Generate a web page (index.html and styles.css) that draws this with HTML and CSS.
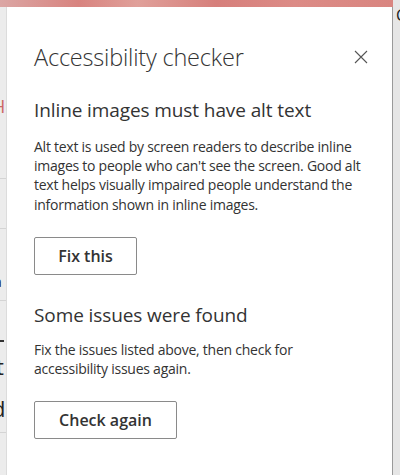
FILE: index.html
```html
<!DOCTYPE html>
<html>
<head>
<meta charset="utf-8">
<link rel="stylesheet" href="styles.css">
</head>
<body>
<div class="screen">
  <div class="topbar"></div>
  <div class="topbar-right"><span class="frag-c">C</span></div>
  <div class="leftstrip">
    <span class="frag frag-h">H</span>
    <span class="rule r1"></span>
    <span class="rule r2"></span>
    <span class="frag frag-a">a</span>
    <span class="rule r3"></span>
    <span class="dash"></span>
    <span class="frag frag-t">t</span>
    <span class="frag frag-d">d</span>
    <span class="rule r4"></span>
  </div>
  <div class="panel">
    <div class="panel-header">
      <h1 class="title">Accessibility checker</h1>
      <button class="close" aria-label="Close">
        <svg width="14" height="14" viewBox="0 0 14 14"><path d="M1 1 L13 13 M13 1 L1 13" stroke="#555" stroke-width="1.1" fill="none"/></svg>
      </button>
    </div>
    <section class="issue">
      <h2 class="heading">Inline images must have alt text</h2>
      <p class="body">Alt text is used by screen readers to describe inline images to people who can't see the screen. Good alt text helps visually impaired people understand the information shown in inline images.</p>
      <button class="btn btn-fix">Fix this</button>
    </section>
    <section class="issue issue-2">
      <h2 class="heading">Some issues were found</h2>
      <p class="body">Fix the issues listed above, then check for accessibility issues again.</p>
      <button class="btn btn-check">Check again</button>
    </section>
  </div>
</div>
</body>
</html>
```
FILE: styles.css
```css
html, body {
  margin: 0;
  padding: 0;
  width: 400px;
  height: 475px;
  overflow: hidden;
  background: #fff;
  font-family: "Open Sans", "Noto Sans", "Liberation Sans", sans-serif;
}
.screen {
  display: grid;
  grid-template-columns: 7px 386px 7px;
  grid-template-rows: 7px 468px;
  width: 400px;
  height: 475px;
}
.topbar {
  grid-column: 1 / 3;
  grid-row: 1;
  background: linear-gradient(90deg, #dba6a4 0%, #d8837f 20%, #e0a09a 35%, #d67f7b 55%, #dc8b86 75%, #d98580 100%);
}
.topbar-right {
  grid-column: 3;
  grid-row: 1 / 3;
  background: #e6e6e6;
  position: relative;
  overflow: hidden;
}
.frag-c {
  position: absolute;
  left: 3px;
  top: 4px;
  font-size: 16px;
  color: #222;
}
.leftstrip {
  grid-column: 1;
  grid-row: 2;
  background: #ececec;
  position: relative;
  overflow: hidden;
  border-right: 1px solid #dcdcdc;
}
.frag {
  position: absolute;
  font-size: 22px;
  line-height: 1;
  color: #222;
}
.frag-h { top: 90px; left: -8px; color: #c66; font-size: 18px; }
.frag-a { top: 268px; left: -6px; font-size: 14px; }
.frag-t { top: 348px; left: -4px; }
.frag-d { top: 390px; left: -8px; }
.dash {
  position: absolute;
  top: 333px;
  left: 0;
  width: 4px;
  height: 2px;
  background: #333;
}
.rule {
  position: absolute;
  left: 0;
  width: 7px;
  height: 1px;
  background: #d4d4d4;
}
.r1 { top: 171px; }
.r2 { top: 221px; }
.r3 { top: 293px; }
.r4 { top: 425px; }
.panel {
  grid-column: 2;
  grid-row: 2;
  background: #fff;
  border-right: 1px solid #9a9a9a;
  padding: 0 0 0 27px;
  color: #333;
}
.panel-header {
  display: flex;
  align-items: center;
  justify-content: space-between;
  padding: 34px 24px 0 0;
}
.title {
  margin: 0;
  font-size: 23.5px;
  font-weight: 300;
  line-height: 32px;
  letter-spacing: -0.2px;
  color: #333;
}
.close {
  border: 0;
  background: none;
  padding: 0;
  width: 14px;
  height: 14px;
  display: flex;
  margin-top: -1px;
}
.issue {
  margin-top: 24px;
}
.heading {
  margin: 0;
  font-size: 19px;
  font-weight: 400;
  line-height: 26px;
  letter-spacing: -0.1px;
  color: #333;
}
.body {
  margin: 14px 0 0;
  font-size: 14px;
  line-height: 19.2px;
  letter-spacing: -0.25px;
  padding-right: 24px;
  color: #333;
}
.btn {
  display: block;
  margin-top: 23px;
  height: 38px;
  border: 1px solid #8a8a8a;
  border-radius: 2px;
  background: #fff;
  font-family: inherit;
  font-size: 16px;
  font-weight: 600;
  color: #333;
  padding: 0;
}
.btn-fix { width: 103px; }
.btn-check { width: 143px; }
.issue-2 { margin-top: 27px; }
.issue-2 .body { margin-top: 12px; }
```
